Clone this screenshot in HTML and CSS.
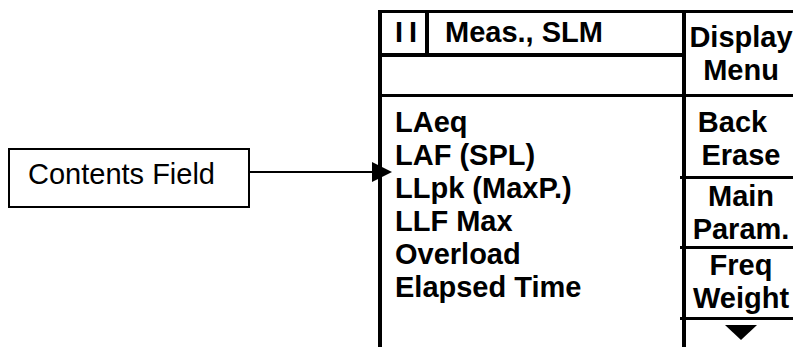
FILE: index.html
```html
<!DOCTYPE html>
<html>
<head>
<meta charset="utf-8">
<link rel="stylesheet" href="styles.css">
</head>
<body>
<div class="page">
  <div class="callout-box">Contents Field</div>
  <svg class="connector" width="142" height="22" viewBox="0 0 142 22">
    <line x1="0" y1="11" x2="124" y2="11" stroke="#000" stroke-width="2"/>
    <polygon points="122,1 142,11 122,21" fill="#000"/>
  </svg>
  <div class="panel">
    <div class="left">
      <div class="head">
        <div class="pause">I I</div>
        <div class="title">Meas., SLM</div>
      </div>
      <div class="blank"></div>
      <div class="list">
        <div>LAeq</div>
        <div>LAF (SPL)</div>
        <div>LLpk (MaxP.)</div>
        <div>LLF Max</div>
        <div>Overload</div>
        <div>Elapsed Time</div>
      </div>
    </div>
    <div class="right">
      <div class="rrow r1"><div>Display</div><div>Menu</div></div>
      <div class="rrow r2"><div class="back">Back</div><div>Erase</div></div>
      <div class="rrow r3"><div>Main</div><div>Param.</div></div>
      <div class="rrow r4"><div>Freq</div><div>Weight</div></div>
      <div class="r5">
        <svg width="32" height="15" viewBox="0 0 32 15"><polygon points="0,0 32,0 16,15" fill="#000"/></svg>
      </div>
    </div>
  </div>
</div>
</body>
</html>
```

FILE: styles.css
```css
html, body {
  margin: 0;
  padding: 0;
  background: #fff;
  width: 793px;
  height: 347px;
  overflow: hidden;
}
.page {
  display: flex;
  align-items: flex-start;
  padding-left: 8px;
  font-family: "Liberation Sans", Arial, sans-serif;
  color: #000;
}
.callout-box {
  margin-top: 148px;
  width: 242px;
  height: 60px;
  box-sizing: border-box;
  border: 2px solid #000;
  padding: 8px 0 0 18px;
  font-size: 29px;
  line-height: 32px;
  white-space: nowrap;
  flex: none;
}
.connector {
  flex: none;
  margin-top: 161px;
  margin-right: -14px;
  position: relative;
  z-index: 2;
  display: block;
}
.panel {
  flex: none;
  display: flex;
  margin-top: 10px;
  border-top: 3px solid #000;
  height: 334px;
  font-weight: bold;
  font-size: 29px;
  line-height: 34px;
  white-space: nowrap;
}
.left {
  width: 308px;
  box-sizing: border-box;
  border-left: 4px solid #000;
  border-right: 4px solid #000;
  display: flex;
  flex-direction: column;
}
.head {
  display: flex;
  height: 44px;
  box-sizing: border-box;
  border-bottom: 4px solid #000;
}
.pause {
  width: 47px;
  box-sizing: border-box;
  border-right: 4px solid #000;
  padding: 2px 0 0 13px;
  letter-spacing: -1px;
}
.title {
  padding: 2px 0 0 16px;
}
.blank {
  height: 40px;
  box-sizing: border-box;
  border-bottom: 3px solid #000;
}
.list {
  padding: 9px 0 0 13px;
  line-height: 33px;
}
.right {
  width: 110px;
  display: flex;
  flex-direction: column;
  text-align: center;
  line-height: 33px;
}
.rrow {
  box-sizing: border-box;
  border-bottom: 3px solid #000;
  position: relative;
}
.rrow::after {
  content: "";
  position: absolute;
  left: -6px;
  bottom: -3px;
  width: 6px;
  height: 3px;
  background: #000;
}
.r1 { height: 84px; padding-top: 8px; }
.r2 { height: 82px; padding-top: 9px; }
.r3 { height: 70px; padding-top: 1px; }
.r4 { height: 71px; padding-top: 0; }
.back { padding-right: 17px; }
.r5 {
  padding-top: 5px;
  display: flex;
  justify-content: center;
}
.r5 svg { display: block; }
```
